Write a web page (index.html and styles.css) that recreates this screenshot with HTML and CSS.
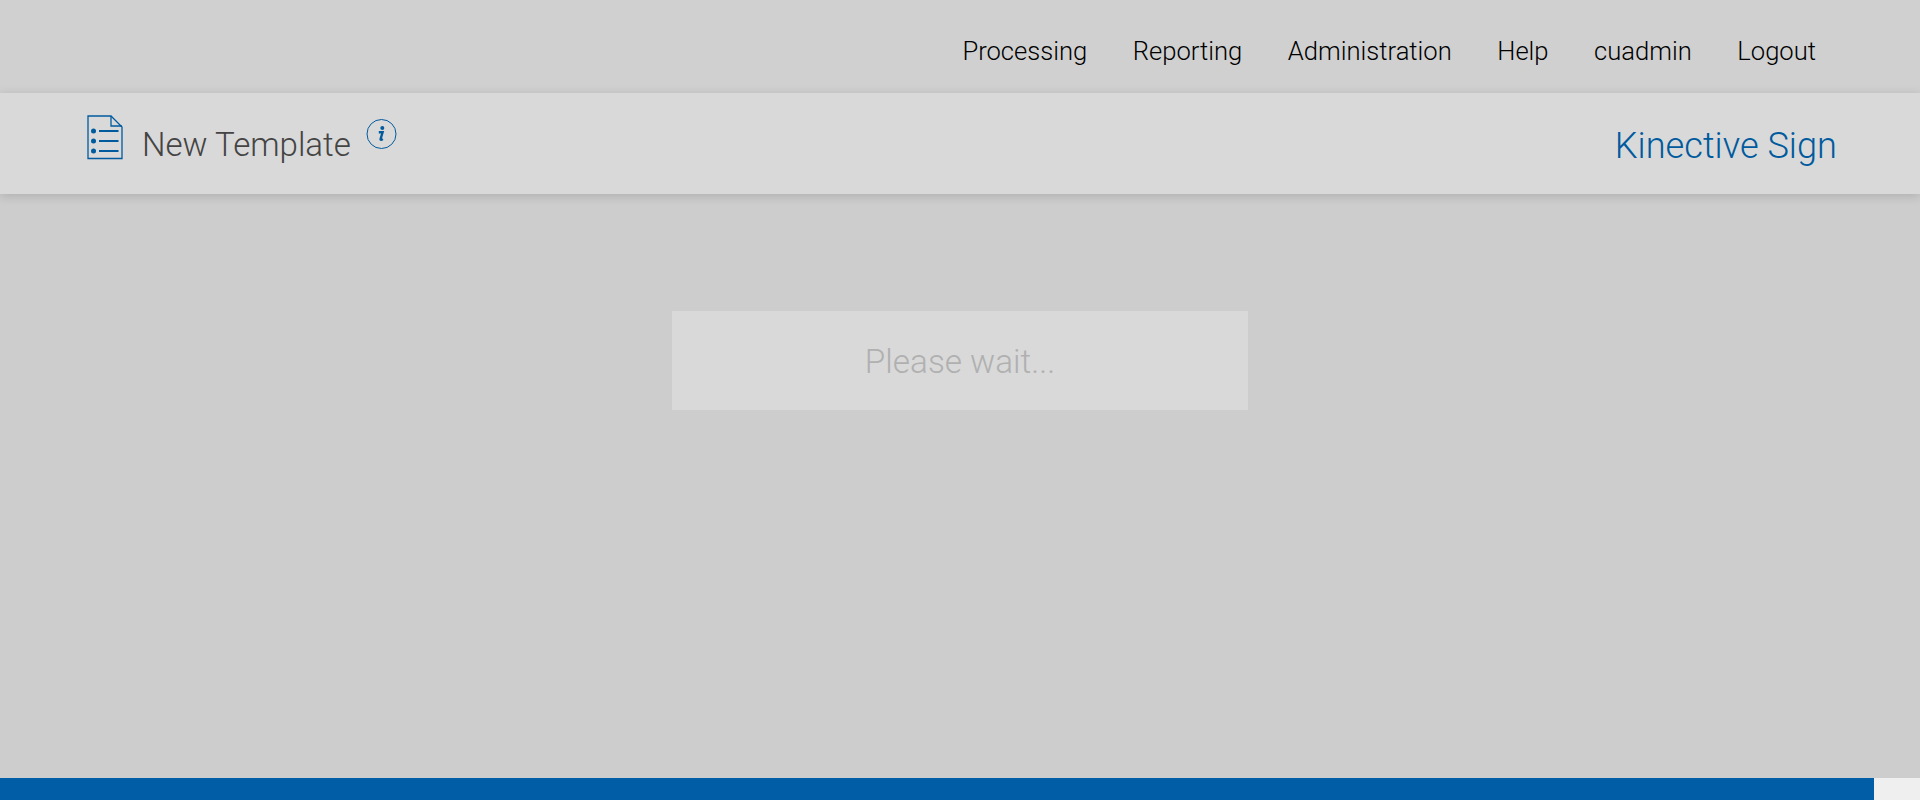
FILE: index.html
```html
<!DOCTYPE html>
<html lang="en">
<head>
<meta charset="utf-8">
<title>New Template</title>
<link rel="stylesheet" href="styles.css">
</head>
<body>
<nav class="topnav">
  <a class="navlink">Processing</a>
  <a class="navlink">Reporting</a>
  <a class="navlink">Administration</a>
  <a class="navlink">Help</a>
  <a class="navlink">cuadmin</a>
  <a class="navlink">Logout</a>
</nav>
<header class="pagehead">
  <div class="titlewrap">
    <svg class="docicon" width="36" height="45" viewBox="0 0 36 45" fill="none">
      <path d="M1 1H24L35 12V43.500H1Z" fill="none" stroke="#005a9e" stroke-width="1.300"/>
      <path d="M24 1V11H35" stroke="#005a9e" stroke-width="1.300"/>
      <circle cx="6.500" cy="16" r="2.500" fill="#005a9e"/>
      <circle cx="6.500" cy="26" r="2.500" fill="#005a9e"/>
      <circle cx="6.500" cy="36" r="2.500" fill="#005a9e"/>
      <path d="M12 16H31.500M12 26H31.500M12 36H31.500" stroke="#005a9e" stroke-width="2"/>
    </svg>
    <h1 class="title">New Template</h1>
    <svg class="infoicon" width="31" height="31" viewBox="0 0 31 31" fill="none">
      <circle cx="15.500" cy="15" r="14.500" stroke="#005a9e" stroke-width="1"/>
      <circle cx="16.300" cy="9" r="2" fill="#005a9e"/>
      <path d="M12.800 13.300H16.600L14.600 20C14.400 21 15.300 21 16.800 20" stroke="#005a9e" stroke-width="2.400" fill="none"/>
    </svg>
  </div>
  <div class="brand">Kinective Sign</div>
</header>
<main class="content">
  <div class="waitbox">Please wait...</div>
</main>
<footer class="footer">
  <div class="footerbar"></div>
  <div class="footerend"></div>
</footer>
</body>
</html>
```

FILE: styles.css
```css
html, body {
  margin: 0;
  padding: 0;
  height: 800px;
  overflow: hidden;
}
body {
  display: flex;
  flex-direction: column;
  font-family: Roboto, "Liberation Sans", sans-serif;
  font-weight: 300;
  background: #cdcdcd;
}
.topnav {
  height: 93px;
  flex: none;
  box-sizing: border-box;
  padding: 0 104px 0 0;
  display: flex;
  justify-content: flex-end;
  align-items: center;
  gap: 45.500px;
  background: #d0d0d0;
}
.navlink {
  font-size: 25.600px;
  color: #000;
  position: relative;
  top: 4px;
}
.pagehead {
  height: 101px;
  flex: none;
  box-sizing: border-box;
  padding: 0 83px 0 87px;
  display: flex;
  justify-content: space-between;
  background: #d9d9d9;
  box-shadow: 0 2px 10px rgba(0, 0, 0, 0.15);
  position: relative;
}
.titlewrap {
  display: flex;
  align-items: flex-start;
}
.docicon {
  margin-top: 22px;
  flex: none;
}
.title {
  margin: 30px 0 0 19px;
  font-size: 33.100px;
  line-height: 44px;
  font-weight: 300;
  color: #444;
}
.infoicon {
  margin: 26px 0 0 15px;
  flex: none;
}
.brand {
  margin-top: 30px;
  font-size: 36.200px;
  line-height: 46px;
  color: #005a9e;
}
.content {
  flex: 1;
  display: flex;
  justify-content: center;
  align-items: flex-start;
  padding-top: 117px;
}
.waitbox {
  width: 576px;
  height: 99px;
  line-height: 101px;
  text-align: center;
  background: #d9d9d9;
  color: #b0b0b0;
  font-size: 33.300px;
}
.footer {
  height: 22px;
  flex: none;
  display: flex;
}
.footerbar {
  flex: 1;
  background: #005da6;
}
.footerend {
  width: 46px;
  background: #efefef;
}
```
